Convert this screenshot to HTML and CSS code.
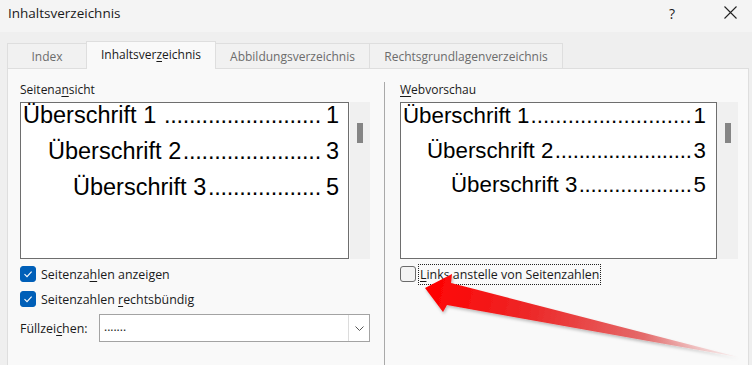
FILE: index.html
```html
<!DOCTYPE html>
<html lang="de">
<head>
  <meta charset="UTF-8" />
  <title>Inhaltsverzeichnis</title>
  <link rel="stylesheet" href="styles.css">
</head>
<body>
  <div class="titlebar">
    <span class="title">Inhaltsverzeichnis</span>
    <span class="help">?</span>
    <svg class="close" width="13" height="13" viewBox="0 0 13 13"><path d="M0.5 0.5 L12.5 12.5 M12.5 0.5 L0.5 12.5" stroke="#222" stroke-width="1.1" fill="none"/></svg>
  </div>

  <div class="dialog">
    <div class="tabs">
      <div class="tab tab-index">Index</div>
      <div class="tab active">Inhaltsver<u>z</u>eichnis</div>
      <div class="tab tab-abb">Abbildungsverzeichnis</div>
      <div class="tab tab-rg">Rechtsgrundlagenverzeichnis</div>
    </div>

    <div class="panel">
      <div class="col">
        <div class="group-label">Seitena<u>n</u>sicht</div>
        <div class="preview-row">
          <div class="preview big">
            <div class="toc-line first-line"><span class="toc-title">Überschrift 1&nbsp;</span><span class="toc-dots">.........................</span><span class="toc-num">1</span></div>
            <div class="toc-line lvl2"><span class="toc-title">Überschrift 2</span><span class="toc-dots">......................</span><span class="toc-num">3</span></div>
            <div class="toc-line lvl3"><span class="toc-title">Überschrift 3</span><span class="toc-dots">..................</span><span class="toc-num">5</span></div>
          </div>
          <div class="track"><div class="thumb"></div></div>
        </div>
        <label class="check first">
          <span class="box checked"><svg width="16" height="16" viewBox="0 0 16 16"><path d="M4.5 8.2 L7 10.6 L11.6 5.6" stroke="#fff" stroke-width="1.1" fill="none"/></svg></span>
          <span>Seitenza<u>h</u>len anzeigen</span>
        </label>
        <label class="check second">
          <span class="box checked"><svg width="16" height="16" viewBox="0 0 16 16"><path d="M4.5 8.2 L7 10.6 L11.6 5.6" stroke="#fff" stroke-width="1.1" fill="none"/></svg></span>
          <span>Seitenzahlen <u>r</u>echtsbündig</span>
        </label>
        <div class="fill-row">
          <span class="fill-label">Füllzei<u>c</u>hen:</span>
          <div class="select">
            <span class="select-value">.......</span>
            <span class="select-btn"><svg width="9" height="5" viewBox="0 0 9 5"><path d="M0.5 0.5 L4.5 4.5 L8.5 0.5" stroke="#555" stroke-width="1" fill="none"/></svg></span>
          </div>
        </div>
      </div>

      <div class="sep"></div>

      <div class="col">
        <div class="group-label"><u>W</u>ebvorschau</div>
        <div class="preview-row">
          <div class="preview small">
            <div class="toc-line"><span class="toc-title">Überschrift 1</span><span class="toc-dots">..........................</span><span class="toc-num">1</span></div>
            <div class="toc-line lvl2"><span class="toc-title">Überschrift 2</span><span class="toc-dots">.......................</span><span class="toc-num">3</span></div>
            <div class="toc-line lvl3"><span class="toc-title">Überschrift 3</span><span class="toc-dots">...................</span><span class="toc-num">5</span></div>
          </div>
          <div class="track wide"><div class="thumb"></div></div>
        </div>
        <label class="check first">
          <span class="box"></span>
          <span class="focus"><u>L</u>inks anstelle von Seitenzahlen</span>
        </label>
      </div>
    </div>
  </div>

  <svg class="arrow" width="752" height="365" viewBox="0 0 752 365">
    <defs>
      <linearGradient id="arrowFill" x1="425" y1="288" x2="738" y2="357" gradientUnits="userSpaceOnUse">
        <stop offset="0" stop-color="#ff0000"/>
        <stop offset="0.35" stop-color="#ec2a2a"/>
        <stop offset="0.7" stop-color="#e46a6a"/>
        <stop offset="1" stop-color="#f6d0d0" stop-opacity="0.3"/>
      </linearGradient>
      <filter id="arrowShadow" x="-10%" y="-30%" width="120%" height="160%">
        <feDropShadow dx="1" dy="2" stdDeviation="1.5" flood-color="#000" flood-opacity="0.25"/>
      </filter>
    </defs>
    <polygon points="425,288 452,274 451,283 738,357 447,305 443,312" fill="url(#arrowFill)" filter="url(#arrowShadow)"/>
  </svg>
</body>
</html>
```

FILE: styles.css
```css
body {
  margin: 0;
  width: 752px;
  height: 365px;
  overflow: hidden;
  font-family: 'Open Sans', 'Noto Sans', sans-serif;
  font-size: 12px;
  color: #1a1a1a;
  background: #efefef;
  position: relative;
}
u {
  text-decoration: underline;
  text-underline-offset: 2px;
}
.titlebar {
  height: 32px;
  background: #f4f4f4;
  display: flex;
  align-items: center;
  padding-left: 8px;
  box-sizing: border-box;
}
.title {
  font-size: 13.5px;
  flex: 1;
  margin-top: -6px;
}
.help {
  font-size: 14px;
  margin-right: 49px;
  margin-top: -6px;
}
.close {
  margin-right: 15px;
  margin-top: -7px;
}
.dialog {
  padding: 9px 3px 0 7px;
}
.tabs {
  display: flex;
  align-items: flex-end;
  height: 27px;
  position: relative;
  z-index: 1;
}
.tab {
  height: 25px;
  box-sizing: border-box;
  border: 1px solid #dedede;
  border-bottom: none;
  background: #f1f1f1;
  color: #6c6c6c;
  display: flex;
  align-items: center;
  justify-content: center;
  margin-right: -1px;
}
.tab-index { width: 80px; }
.tab-abb { width: 155px; }
.tab-rg { width: 194px; }
.tab.active {
  width: 130px;
  height: 28px;
  background: #f9f9f9;
  color: #1a1a1a;
  margin-bottom: -1px;
  padding-bottom: 2px;
}
.panel {
  background: #f9f9f9;
  border: 1px solid #dedede;
  border-bottom: none;
  height: 297px;
  box-sizing: border-box;
  display: flex;
  padding: 13px 0 0 12px;
}
.col {
  display: flex;
  flex-direction: column;
}
.col:first-child { width: 350px; }
.col:last-child { width: 338px; }
.sep {
  width: 1px;
  background: #a9a9a9;
  margin: 0 15px 0 14px;
}
.group-label {
  line-height: 16px;
  margin-bottom: 4px;
}
.preview-row {
  display: flex;
}
.preview {
  height: 157px;
  box-sizing: border-box;
  border: 1px solid #6e6e6e;
  background: #fff;
  color: #000;
  font-family: 'Liberation Sans', Arial, sans-serif;
  display: flex;
  flex-direction: column;
}
.preview.big {
  width: 329px;
  font-size: 23.5px;
  padding: 0 9px 0 2px;
  gap: 10px;
}
.preview.big .toc-line { line-height: 26px; }
.preview.big .toc-line:first-child { margin-top: -1px; }
.preview.big .lvl2 { padding-left: 25px; }
.preview.big .lvl3 { padding-left: 50px; }
.preview.big .toc-num { padding-left: 5px; }
.preview.big .toc-dots { letter-spacing: -0.25px; }
.preview.small {
  width: 317px;
  font-size: 22.3px;
  padding: 0 10px 0 2px;
  gap: 9.5px;
}
.preview.small .toc-line { line-height: 25px; }
.preview.small .lvl2 { padding-left: 24px; }
.preview.small .lvl3 { padding-left: 48px; }
.preview.small .lvl2 .toc-dots,
.preview.small .lvl3 .toc-dots { letter-spacing: -0.25px; }
.preview.small .toc-num { padding-left: 2px; }
.toc-line {
  display: flex;
  white-space: nowrap;
}
.toc-title,
.toc-num {
  flex-shrink: 0;
}
.toc-dots {
  margin-left: auto;
}
.track {
  width: 20px;
  height: 157px;
  margin-left: 1px;
  background: #f0f0f0;
  padding: 21px 0 0 7px;
  box-sizing: border-box;
}
.track.wide {
  width: 21px;
  margin-left: 0;
  padding-left: 8px;
}
.thumb {
  width: 6px;
  height: 20px;
  background: #858585;
}
.check {
  display: flex;
  align-items: center;
  height: 16px;
  font-size: 12.4px;
  gap: 5px;
}
.check.first { margin-top: 7px; }
.check.second { margin-top: 9px; }
.box {
  width: 16px;
  height: 16px;
  box-sizing: border-box;
  border-radius: 3px;
  border: 1px solid #6b6b6b;
  background: #f4f4f4;
  display: flex;
}
.box.checked {
  background: #005fb8;
  border-color: #005fb8;
}
.box.checked svg { margin: -1px; }
.focus {
  outline: 1px dotted #222;
  padding: 1px 1px;
  margin-left: -2px;
  line-height: 17px;
}
.fill-row {
  display: flex;
  align-items: center;
  margin-top: 7px;
}
.fill-label {
  width: 79px;
  font-size: 12.4px;
}
.select {
  width: 271px;
  height: 28px;
  box-sizing: border-box;
  border: 1px solid #a3a3a3;
  background: #fff;
  display: flex;
  align-items: center;
}
.select-value {
  flex: 1;
  padding-left: 4px;
  font-size: 12px;
  margin-top: -3px;
}
.select-btn {
  width: 21px;
  height: 26px;
  box-sizing: border-box;
  border-left: 1px solid #dcdcdc;
  display: flex;
  align-items: center;
  justify-content: center;
}
.arrow {
  position: absolute;
  left: 0;
  top: 0;
  pointer-events: none;
}
```
